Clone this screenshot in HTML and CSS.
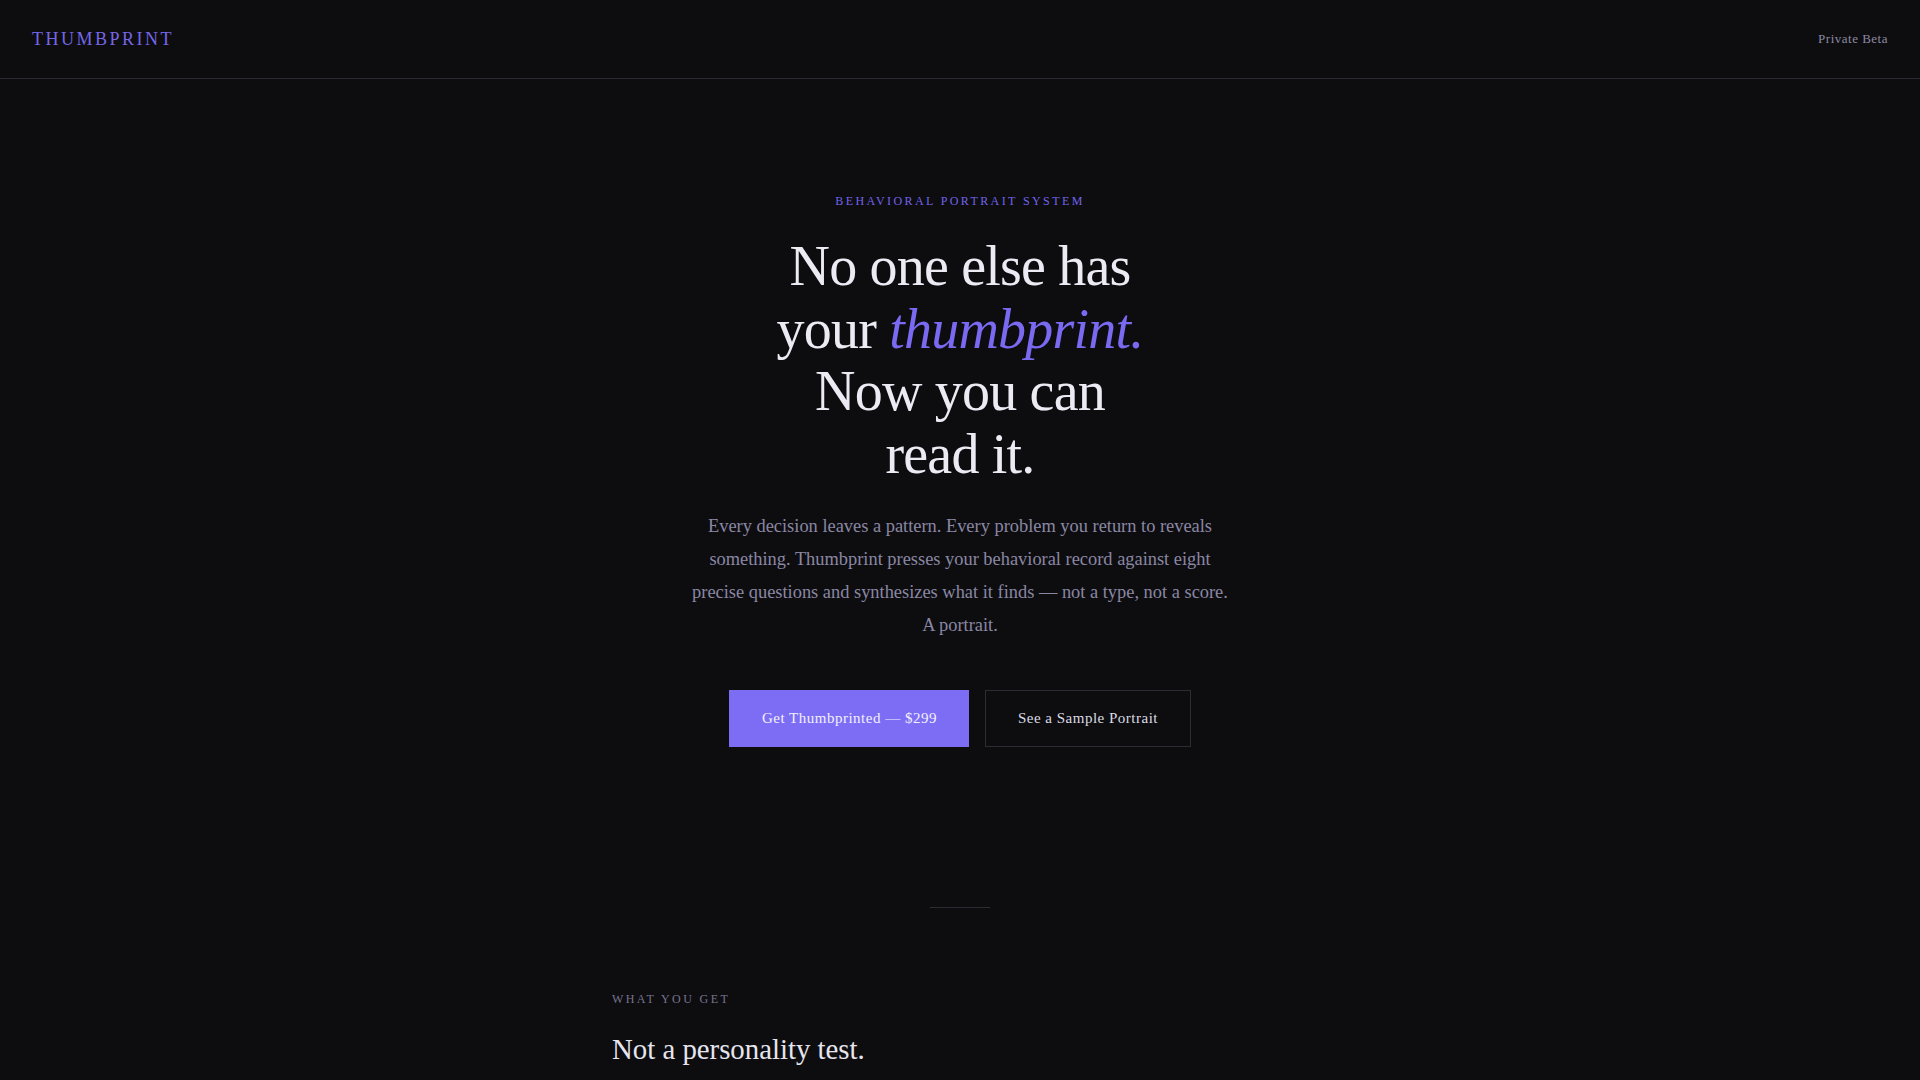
FILE: index.html
```html
<!DOCTYPE html>
<html lang="en">
<head>
<meta charset="utf-8">
<title>Thumbprint — Behavioral Portrait System</title>
<link rel="stylesheet" href="styles.css">
</head>
<body>
<header class="site-header">
  <div class="logo">THUMBPRINT</div>
  <div class="status">Private Beta</div>
</header>

<main>
  <section class="hero">
    <p class="eyebrow">BEHAVIORAL PORTRAIT SYSTEM</p>
    <h1 class="hero-title">No one else has your <em>thumbprint.</em> Now you can read it.</h1>
    <p class="hero-lead">Every decision leaves a pattern. Every problem you return to reveals something. Thumbprint presses your behavioral record against eight precise questions and synthesizes what it finds — not a type, not a score. A portrait.</p>
    <div class="actions">
      <a class="btn btn-primary" href="#">Get Thumbprinted — $299</a>
      <a class="btn btn-secondary" href="#">See a Sample Portrait</a>
    </div>
  </section>

  <div class="divider"></div>

  <section class="features">
    <p class="label">WHAT YOU GET</p>
    <h2 class="section-title">Not a personality test.</h2>
  </section>
</main>
</body>
</html>
```

FILE: styles.css
```css
html, body {
  margin: 0;
  padding: 0;
}

body {
  background: #0d0d10;
  color: #ecebf3;
  font-family: "Liberation Serif", "Times New Roman", serif;
}

.site-header {
  display: flex;
  justify-content: space-between;
  align-items: center;
  height: 78px;
  padding: 0 32px;
  border-bottom: 1px solid #2a2a33;
}

.logo {
  font-size: 18px;
  letter-spacing: 2.5px;
  color: #7566e6;
}

.status {
  font-size: 13px;
  letter-spacing: 0.5px;
  color: #8b89a0;
}

.hero {
  text-align: center;
  padding: 115px 32px 80px;
}

.eyebrow {
  margin: 0 0 26px;
  font-size: 12px;
  letter-spacing: 2.4px;
  color: #7263ea;
}

.hero-title {
  margin: 0 auto;
  max-width: 380px;
  font-size: 56px;
  line-height: 1.12;
  font-weight: normal;
  letter-spacing: -0.8px;
  color: #ecebf3;
}

.hero-title em {
  font-style: italic;
  color: #7a6af2;
}

.hero-lead {
  margin: 24px auto 0;
  max-width: 540px;
  font-size: 18.4px;
  line-height: 1.8;
  color: #8a87a3;
}

.actions {
  display: flex;
  justify-content: center;
  gap: 16px;
  margin-top: 48px;
}

.btn {
  display: inline-block;
  padding: 19px 31.5px;
  border: 1px solid transparent;
  font-size: 15px;
  letter-spacing: 0.5px;
  text-decoration: none;
  line-height: 17px;
}

.btn-primary {
  background: #7d6df5;
  border-color: #7d6df5;
  color: #f3f1fb;
}

.btn-secondary {
  background: transparent;
  border-color: #2c2c36;
  color: #dcdbe4;
}

.divider {
  width: 60px;
  height: 1px;
  margin: 80px auto 0;
  background: #2c2c35;
}

.features {
  max-width: 696px;
  margin: 0 auto;
  padding: 84px 0 80px;
}

.label {
  margin: 0 0 25px;
  font-size: 12px;
  letter-spacing: 2.4px;
  color: #77748e;
}

.section-title {
  margin: 0;
  font-size: 28.8px;
  line-height: 1.2;
  font-weight: normal;
  color: #e6e5ee;
}
```
